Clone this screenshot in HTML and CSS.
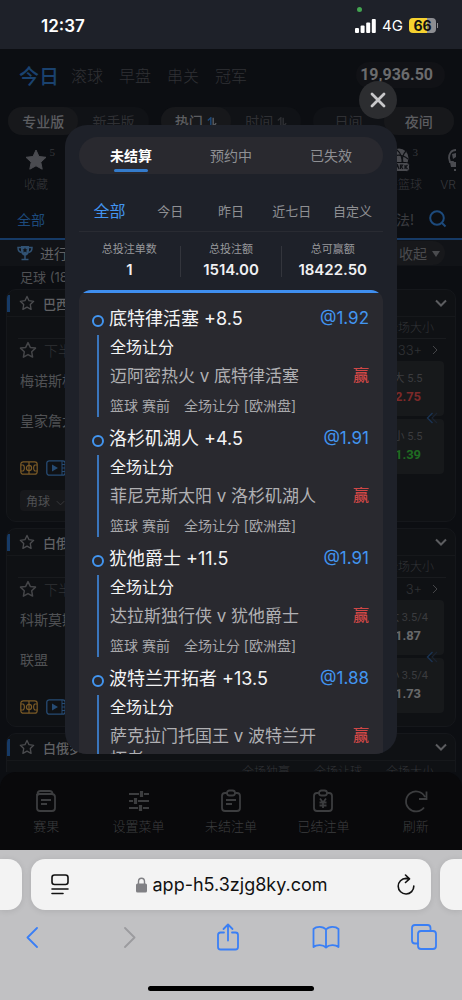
FILE: index.html
```html
<!DOCTYPE html>
<html lang="zh-CN">
<head>
<meta charset="utf-8">
<meta name="viewport" content="width=device-width, initial-scale=1">
<title>未结算注单</title>
<link rel="stylesheet" href="styles.css">
</head>
<body>
<svg class="defs" width="0" height="0" aria-hidden="true">
  <symbol id="star" viewBox="0 0 18 18"><path d="M9 1.600l2.300 4.800 5.200.7-3.800 3.700.9 5.300L9 13.600l-4.600 2.500.9-5.300L1.500 7.100l5.200-.7z" fill="none" stroke="currentColor" stroke-width="1.500" stroke-linejoin="round"/></symbol>
  <symbol id="down" viewBox="0 0 12 8"><path d="M1 1.500l5 5 5-5" fill="none" stroke="currentColor" stroke-width="2"/></symbol>
  <symbol id="thin-down" viewBox="0 0 12 8"><path d="M1 1.500l5 5 5-5" fill="none" stroke="currentColor" stroke-width="1.200"/></symbol>
  <symbol id="next" viewBox="0 0 6 10"><path d="M1 1l4 4-4 4" fill="none" stroke="currentColor" stroke-width="1"/></symbol>
  <symbol id="swap" viewBox="0 0 10 10"><path d="M.8 3.600L3.800.8v8.400" fill="none" stroke="var(--up, currentColor)" stroke-width="1.400"/><path d="M6.200.8v8.400l3-3" fill="none" stroke="currentColor" stroke-width="1.400"/></symbol>
  <symbol id="pitch" viewBox="0 0 18 14"><g fill="none" stroke="currentColor" stroke-width="1.200"><rect x=".8" y=".8" width="16.400" height="12.400" rx="2.500"/><path d="M9 1v12M1 4h2.200c1.600 1 1.600 5 0 6H1M17 4h-2.200c-1.600 1-1.600 5 0 6H17"/><circle cx="9" cy="7" r="2.600"/></g></symbol>
  <symbol id="video" viewBox="0 0 20 16"><rect x=".8" y=".8" width="18.400" height="14.400" rx="2.500" fill="none" stroke="currentColor" stroke-width="1.300"/><path d="M16 1v14M16 4.500h3M16 8h3M16 11.500h3" stroke="currentColor" fill="none"/><path d="M6 4.500l6 3.500-6 3.500z" fill="currentColor"/></symbol>
  <symbol id="more" viewBox="0 0 12 12"><path d="M6.500 1l-5 5 5 5" fill="none" stroke="#1b3352" stroke-width="1.400"/><path d="M11 1L6 6l5 5" fill="none" stroke="#1a2330" stroke-width="1.200"/></symbol>
</svg>
<div class="phone">
  <header class="status">
    <span class="clock">12:37</span>
    <span class="camera-dot"></span>
    <span class="signals">
      <svg width="21" height="14" viewBox="0 0 21 14" fill="#fff"><rect x="0" y="9" width="4" height="5" rx="1"/><rect x="5.600" y="6.500" width="4" height="7.500" rx="1"/><rect x="11.200" y="3.500" width="4" height="10.500" rx="1"/><rect x="16.800" y="0" width="4" height="14" rx="1"/></svg>
      <span class="net">4G</span>
      <span class="battery">66</span>
    </span>
  </header>

  <main class="app">
    <div class="page">
      <nav class="sports">
        <a class="on" href="#">今日</a><a href="#">滚球</a><a href="#">早盘</a><a href="#">串关</a><a href="#">冠军</a>
        <span class="balance">19,936.50</span>
      </nav>
      <div class="modes">
        <div class="pair"><button class="sel">专业版</button><button>新手版</button></div>
        <div class="pair"><button class="sel">热门<svg class="swap lit" width="10" height="10"><use href="#swap"/></svg></button><button>时间<svg class="swap" width="10" height="10"><use href="#swap"/></svg></button></div>
        <div class="pair"><button>日间</button><button class="sel">夜间</button></div>
      </div>
      <div class="kinds">
        <a class="kind" href="#"><svg width="24" height="24" viewBox="0 0 24 24"><path d="M12 2l3 6.500 7 .8-5.200 4.900 1.400 7L12 17.800l-6.200 3.400 1.400-7L2 9.300l7-.8z" fill="#4a4b50" stroke="#4a4b50" stroke-linejoin="round"/></svg><span>收藏</span><sup>5</sup></a>
        <a class="kind ball" href="#"><svg width="24" height="24" viewBox="0 0 24 24"><circle cx="13" cy="10" r="9.500" fill="#4a4b50"/><path d="M4 10c6-4 12-4 18 1M10 1c5 4 7 9 6 16M20 3c-3 3-4 8-3 12" fill="none" stroke="#101216" stroke-width="1.200"/><rect x="1" y="14.500" width="22.500" height="9" rx="3" fill="#4a4b50" stroke="#0c0e12"/><path d="M4 21v-4h3v2H4M10 21l1.500-4 1.500 4M14.500 21v-4h2l-1 2 1.500 2M19 17v4M21.500 17L19.500 19l2 2" fill="none" stroke="#101216" stroke-width="1.200"/></svg><span>街头篮球</span><sup>3</sup></a>
        <a class="kind vr" href="#"><svg width="8" height="24" viewBox="0 0 8 24"><path d="M8 2C3 2 1 6 1 10l1 4h3l3 3" fill="none" stroke="#4a4b50" stroke-width="1.800"/><path d="M4 6l4-1v4l-3 2zM2 14h6v5H3zM6 21h2v2H6z" fill="#4a4b50"/></svg><span>VR</span></a>
      </div>
      <nav class="leagues">
        <a class="on" href="#">全部</a>
        <span class="tail">法!</span>
        <button class="search" aria-label="搜索"><svg width="18" height="18" viewBox="0 0 18 18" fill="none" stroke="#1d4a7c" stroke-width="2"><circle cx="8" cy="8" r="6.800"/><path d="M13 13l3.500 3.500"/></svg></button>
      </nav>
      <div class="live">
        <svg width="16" height="16" viewBox="0 0 16 16"><path d="M4 1h8v5c0 3-2 4.500-4 4.500S4 9 4 6z" fill="#315273"/><path d="M4 2.500H1c0 3 1 4.500 3.500 5M12 2.500h3c0 3-1 4.500-3.500 5M8 10v4M4.500 14.500h7" fill="none" stroke="#315273" stroke-width="1.500"/><path d="M8 2.500l.8 1.700 1.700.2-1.200 1.200.3 1.800L8 6.500l-1.600.9.300-1.800-1.200-1.200 1.700-.2z" fill="#111317"/></svg>
        <span>进行</span>
        <button class="fold">收起<i></i></button>
      </div>
      <p class="group">足球 (18</p>

      <section class="match">
        <header><svg width="16" height="16"><use href="#star"/></svg><b>巴西</b><svg class="arrow" width="12" height="8"><use href="#down"/></svg></header>
        <div class="heads"><span>全场大小</span></div>
        <div class="period"><svg width="18" height="18"><use href="#star"/></svg><span>下半</span><a href="#">33+<svg width="6" height="10"><use href="#next"/></svg></a></div>
        <div class="body">
          <div class="teams"><p>梅诺斯杯</p><p>皇家詹大</p>
            <div class="icons"><svg class="gold" width="18" height="14"><use href="#pitch"/></svg><svg class="azure" width="20" height="16"><use href="#video"/></svg></div>
            <button class="chip">角球<svg width="9" height="6"><use href="#thin-down"/></svg></button>
          </div>
          <div class="odds"><button><span>大 5.5</span><b class="red">2.75</b></button><button><span>小 5.5</span><b class="green">1.39</b></button><svg class="more" width="12" height="12"><use href="#more"/></svg></div>
        </div>
      </section>

      <section class="match">
        <header><svg width="16" height="16"><use href="#star"/></svg><b>白俄</b><svg class="arrow" width="12" height="8"><use href="#down"/></svg></header>
        <div class="heads"><span>全场大小</span></div>
        <div class="period"><svg width="18" height="18"><use href="#star"/></svg><span>下半</span><a href="#">3+<svg width="6" height="10"><use href="#next"/></svg></a></div>
        <div class="body">
          <div class="teams"><p>科斯莫斯</p><p>联盟</p>
            <div class="icons"><svg class="gold" width="18" height="14"><use href="#pitch"/></svg><svg class="azure" width="20" height="16"><use href="#video"/></svg></div>
          </div>
          <div class="odds"><button><span>大 3.5/4</span><b>1.87</b></button><button><span>小 3.5/4</span><b>1.73</b></button><svg class="more" width="12" height="12"><use href="#more"/></svg></div>
        </div>
      </section>

      <section class="match">
        <header><svg width="16" height="16"><use href="#star"/></svg><b>白俄罗</b><svg class="arrow" width="12" height="8"><use href="#down"/></svg></header>
        <div class="heads"><span>全场独赢</span><span>全场让球</span><span>全场大小</span></div>
      </section>
    </div>

    <nav class="tabbar">
      <a href="#"><svg viewBox="0 0 24 24"><path d="M3.500 5c0-2 1-3 3-3h9c2 0 3 1 3 3M3 7.500C3 6 4 5 5.500 5h12C19.500 5 21 6 21 8v11c0 2-1 3-3 3H6c-2 0-3-1-3-3zM3 8V5M7 11h10M7 15h6"/></svg>赛果</a>
      <a href="#"><svg viewBox="0 0 24 24"><path d="M2 5h10M17 5h5M2 12h4M11 12h11M2 19h9M16 19h6"/><path d="M14.500 2v6M8.500 9v6M13.500 16v6" stroke-width="3.200"/></svg>设置菜单</a>
      <a href="#"><svg viewBox="0 0 24 24"><path d="M8 4H6C4 4 3 5 3 7v12c0 2 1 3 3 3h12c2 0 3-1 3-3V7c0-2-1-3-3-3h-2M7 11h10M7 15h6"/><rect x="8" y="1.500" width="8" height="5" rx="2.500"/></svg>未结注单</a>
      <a href="#"><svg viewBox="0 0 24 24"><path d="M8 4H6C4 4 3 5 3 7v12c0 2 1 3 3 3h12c2 0 3-1 3-3V7c0-2-1-3-3-3h-2M9 9.500l3 4 3-4M12 13v6M8.500 13.500h7M8.500 16.500h7"/><rect x="8" y="1.500" width="8" height="5" rx="2.500"/></svg>已结注单</a>
      <a href="#"><svg viewBox="0 0 24 24"><path d="M20 18.500A10 10 0 1 1 21 8M22.500 2.500V10H15"/></svg>刷新</a>
    </nav>

    <button class="close" aria-label="关闭"><svg width="16" height="16" viewBox="0 0 16 16"><path d="M2 2l12 12M14 2L2 14" stroke="#c8c8ca" stroke-width="2.800" stroke-linecap="round"/></svg></button>
    <div class="dialog" role="dialog" aria-label="注单">
      <div class="tabs"><button class="on">未结算</button><button>预约中</button><button>已失效</button></div>
      <div class="ranges"><button class="on">全部</button><button>今日</button><button>昨日</button><button>近七日</button><button>自定义</button></div>
      <dl class="stats">
        <div><dt>总投注单数</dt><dd>1</dd></div>
        <div><dt>总投注额</dt><dd>1514.00</dd></div>
        <div><dt>总可赢额</dt><dd>18422.50</dd></div>
      </dl>
      <ul class="bets">
        <li><div class="rail"></div><div class="bet"><h3><span>底特律活塞 +8.5</span><b>@1.92</b></h3><p class="play">全场让分</p><p class="versus"><span>迈阿密热火 v 底特律活塞</span><em>赢</em></p><p class="meta"><span>篮球 赛前</span><span>全场让分 [欧洲盘]</span></p></div></li>
        <li><div class="rail"></div><div class="bet"><h3><span>洛杉矶湖人 +4.5</span><b>@1.91</b></h3><p class="play">全场让分</p><p class="versus"><span>菲尼克斯太阳 v 洛杉矶湖人</span><em>赢</em></p><p class="meta"><span>篮球 赛前</span><span>全场让分 [欧洲盘]</span></p></div></li>
        <li><div class="rail"></div><div class="bet"><h3><span>犹他爵士 +11.5</span><b>@1.91</b></h3><p class="play">全场让分</p><p class="versus"><span>达拉斯独行侠 v 犹他爵士</span><em>赢</em></p><p class="meta"><span>篮球 赛前</span><span>全场让分 [欧洲盘]</span></p></div></li>
        <li><div class="rail"></div><div class="bet"><h3><span>波特兰开拓者 +13.5</span><b>@1.88</b></h3><p class="play">全场让分</p><p class="versus"><span>萨克拉门托国王 v 波特兰开拓者</span><em>赢</em></p></div></li>
      </ul>
    </div>
  </main>

  <footer class="browser">
    <div class="tabs-strip">
      <span class="peek left"></span>
      <form class="address">
        <button type="button" aria-label="页面设置"><svg width="18" height="21" viewBox="0 0 18 21" fill="none" stroke="#111" stroke-width="1.600" stroke-linecap="round"><rect x="1" y="1" width="16" height="9.500" rx="2.500"/><path d="M1 15h16M1 19.500h11"/></svg></button>
        <label class="site"><svg width="11" height="16" viewBox="0 0 11 16"><rect y="6.500" width="11" height="9" rx="1.500" fill="#808084"/><path d="M2.500 7V4.500a3 3.300 0 0 1 6 0V7" fill="none" stroke="#808084" stroke-width="1.400"/></svg><input type="text" aria-label="网址" value="app-h5.3zjg8ky.com"></label>
        <button type="button" aria-label="重新载入"><svg width="18" height="21" viewBox="0 0 18 21" fill="none" stroke="#111" stroke-width="1.600" stroke-linecap="round" stroke-linejoin="round"><path d="M16.800 12A7.800 7.800 0 1 1 9 4.400L12.500 4.800M8.500 1l4 3.800-4 3.700"/></svg></button>
      </form>
      <span class="peek right"></span>
    </div>
    <nav class="tools">
      <button aria-label="后退"><svg width="12" height="21" viewBox="0 0 12 21"><path d="M11 1L1.500 10.500 11 20"/></svg></button>
      <button class="off" aria-label="前进"><svg width="12" height="21" viewBox="0 0 12 21"><path d="M1 1l9.500 9.500L1 20"/></svg></button>
      <button aria-label="分享"><svg width="24" height="28" viewBox="0 0 24 28"><path d="M8 9.500H4.500Q2 9.500 2 12v12q0 2.500 2.500 2.500h15q2.500 0 2.500-2.500V12q0-2.500-2.500-2.500H16M12 17.500V2M7.500 6L12 1.500 16.500 6"/></svg></button>
      <button aria-label="书签"><svg width="28" height="24" viewBox="0 0 28 24"><path d="M14 4.500C11 1 4.500 1 1.500 4v18c3-2.500 9.500-2.500 12.500.5 3-3 9.500-3 12.500-.5V4C23.500 1 17 1 14 4.500zV22"/></svg></button>
      <button aria-label="标签页"><svg width="26" height="26" viewBox="0 0 26 26"><path d="M7 19.500H4Q1 19.500 1 16.500V4q0-3 3-3h12.500q3 0 3 3v3"/><rect x="7" y="7" width="18" height="18" rx="3"/></svg></button>
    </nav>
    <div class="home"></div>
  </footer>
</div>
</body>
</html>
```
FILE: styles.css
```css
*, *::before, *::after { box-sizing: border-box; }
body { margin: 0; background: #0c0e12; font-family: Inter, "Noto Sans CJK SC", sans-serif; }
button { border: 0; padding: 0; background: none; color: inherit; font: inherit; }
a { color: inherit; text-decoration: none; }
p, h3, ul, dl, dd { margin: 0; padding: 0; }
svg { flex: none; }
.defs { position: absolute; }

.phone { display: flex; flex-direction: column; height: 100vh; min-height: 640px; overflow: hidden; }

.status { position: relative; flex: none; height: 49px; padding: 2px 22px 0 41px; display: flex; align-items: center; justify-content: space-between; background: #1e2129; color: #fff; }
.clock { font-size: 17px; font-weight: 600; }
.camera-dot { position: absolute; top: 7px; right: 100px; width: 5px; height: 5px; border-radius: 50%; background: #43a551; }
.signals { display: flex; align-items: center; gap: 6px; }
.net { font-size: 15px; line-height: 15px; }
.battery { position: relative; margin-right: 4px; width: 27px; height: 15px; border-radius: 4px; background: linear-gradient(90deg, #f5d12f 66%, #8d8e92 66%); color: #111; font-size: 14px; font-weight: 700; line-height: 15px; text-align: center; }
.battery::after { content: ""; position: absolute; top: 5px; right: -2px; width: 1px; height: 5px; background: #8d8e92; }

.app { position: relative; flex: 1; min-height: 0; display: flex; flex-direction: column; }
.page { flex: 1; min-height: 0; overflow: hidden; color: #3b3c40; }

.sports { display: flex; align-items: center; gap: 16px; height: 52px; padding: 0 17px 0 19px; font-size: 16px; font-weight: 300; color: #303135; }
.sports .on { margin-right: -4px; font-size: 20px; font-weight: 500; color: #1a426f; }
.balance { margin-left: auto; height: 26px; padding: 0 12px 0 4px; border-radius: 13px; background: #111216; color: #6a6b6d; font-family: "Liberation Sans Narrow", Roboto, sans-serif; font-size: 16px; font-weight: 700; line-height: 26px; }

.modes { display: flex; justify-content: space-between; gap: 12px; padding: 6px 8px 0; }
.pair { flex: 1; display: flex; height: 28px; border-radius: 14px; background: #101216; font-size: 14px; color: #2f3034; }
.pair button { flex: 1; border-radius: 14px; }
.pair .sel { background: #17181b; color: #5c5d60; font-weight: 500; }
.swap { margin-left: 4px; }
.lit { --up: #1d4a7c; }

.kinds { display: flex; gap: 12px; height: 65px; padding: 13px 0 0 16px; font-size: 12px; font-weight: 300; color: #36373b; }
.kind { position: relative; width: 40px; display: flex; flex-direction: column; align-items: center; gap: 5px; line-height: 16px; white-space: nowrap; }
.kind sup { position: absolute; top: -2px; right: 1px; font: 300 11px/12px "Liberation Serif", serif; }
.ball { margin-left: auto; width: 48px; }
.ball sup { right: 4px; }
.vr { width: 28px; }
.vr svg { margin-left: 8px; }

.leagues { display: flex; align-items: center; height: 40px; padding: 0 15px 0 17px; border-bottom: 2px solid #163a66; font-size: 14px; }
.leagues .on { color: #1d4a7c; }
.tail { margin-left: auto; margin-right: 15px; }
.search { height: 18px; }

.live { display: flex; align-items: center; gap: 7px; height: 26px; padding: 0 17px 0 17px; background: #111317; font-size: 14px; color: #606164; }
.fold { margin-left: auto; height: 24px; padding: 0 5px 0 12px; border-radius: 12px; background: #17181b; color: #4a4b4e; }
.fold i { display: inline-block; margin-left: 5px; border: 4px solid transparent; border-top: 6px solid #4a4b4e; border-bottom: 0; vertical-align: 2px; }
.group { height: 23px; padding-left: 20px; font-size: 13px; line-height: 22px; color: #505154; }

.match { margin: 0 6px 6px; border: 1px solid #15171b; border-radius: 10px; background: #0f1114; overflow: hidden; }
.match header { display: flex; align-items: center; gap: 8px; height: 27px; padding: 0 8px 0 12px; border-bottom: 1px solid #16181b; background: linear-gradient(#163a66, #163a66) 0 5px / 3px 17px no-repeat; color: #4b4c4f; font-size: 13px; }
.match header b { color: #606164; font-weight: 500; }
.arrow { margin-left: auto; color: #5c5d60; }
.heads { display: flex; justify-content: flex-end; height: 22px; margin: 0 9px 0 11px; border-bottom: 1px solid #191b1e; font-size: 12px; font-weight: 300; line-height: 22px; color: #323337; }
.heads span { width: 72px; text-align: center; }
.period { display: flex; align-items: center; gap: 7px; height: 22px; margin: 0 17px 0 12px; font-size: 14px; font-weight: 300; color: #303135; }
.period svg { color: #444548; }
.period a { margin-left: auto; display: flex; align-items: center; gap: 10px; font-size: 13px; }
.body { display: flex; justify-content: space-between; padding: 0 11px 9px 13px; }
.teams p { height: 40px; font-size: 14px; line-height: 40px; color: #505154; }
.icons { display: flex; align-items: center; gap: 8px; height: 20px; margin-top: 17px; }
.gold { color: #7b5a26; }
.azure { color: #264b73; }
.chip { height: 21px; margin: 12px 0 1px; padding: 0 6px; border-radius: 4px; background: #17181b; color: #505154; font-size: 12px; }
.chip svg { margin-left: 6px; color: #3b3c40; }
.odds { position: relative; width: 72px; display: flex; flex-direction: column; gap: 3px; font-family: "Liberation Sans Narrow", Roboto, "Noto Sans CJK SC", sans-serif; }
.odds button { display: flex; flex-direction: column; align-items: center; height: 55px; padding-top: 9px; border-radius: 4px; background: #17191b; color: #3b3c3f; font-size: 11px; line-height: 18px; }
.odds b { font-size: 13px; color: #68696b; }
.odds .red { color: #7c2929; }
.odds .green { color: #1f6b22; }
.more { position: absolute; top: 51px; right: 6px; }

.tabbar { flex: none; display: flex; height: 78px; padding-top: 17px; border-radius: 16px 16px 0 0; background: #09090b; color: #3c3d3f; font-size: 13px; font-weight: 300; }
.tabbar a { flex: 1; display: flex; flex-direction: column; align-items: center; gap: 4px; line-height: 18px; }
.tabbar svg { width: 24px; height: 24px; fill: none; stroke: currentColor; stroke-width: 1.800; }

.close { position: absolute; top: 32px; right: 65px; display: flex; align-items: center; justify-content: center; width: 38px; height: 38px; border-radius: 50%; background: #2c2d30; }
.dialog { position: absolute; top: 76px; right: 65px; bottom: 96px; left: 65px; display: flex; flex-direction: column; padding: 12px 14px 0; border-radius: 22px; background: #1e2129; overflow: hidden; }
.tabs { flex: none; display: flex; height: 37px; padding: 0 2px; border-radius: 19px; background: #29292f; color: #8f9094; font-size: 14px; }
.tabs button { position: relative; flex: 1; padding-bottom: 2px; }
.tabs .on { color: #fff; font-weight: 700; }
.tabs .on::after { content: ""; position: absolute; bottom: 2px; left: 50%; width: 34px; height: 3px; margin-left: -17px; border-radius: 2px; background: #347bcb; }
.ranges { flex: none; display: flex; align-items: center; height: 43px; margin-top: 15px; border-bottom: 1px solid #292b32; color: #8f9094; font-size: 13px; }
.ranges button { flex: 1; }
.ranges .on { color: #4295f0; font-size: 16px; }
.stats { flex: none; display: flex; height: 58px; padding: 14px 0 13px; text-align: center; }
.stats div { flex: 1; border-left: 1px solid #33353c; }
.stats div:first-child { border-left: 0; }
.stats dt { margin-top: -4px; font-size: 11px; line-height: 14px; color: #97989b; }
.stats dd { margin-top: 2px; font-size: 15px; font-weight: 600; line-height: 24px; color: #f0f0f2; }
.bets { flex: 1; min-height: 0; padding: 14px 14px 0 13px; border-radius: 12px 12px 0 0; background: linear-gradient(#3f8ff0 3px, #29292f 3px); list-style: none; overflow: hidden; }
.bets li { display: flex; gap: 5px; min-height: 116px; margin-bottom: 4px; }
.rail { flex: none; width: 12px; padding: 11px 0 3px; display: flex; flex-direction: column; align-items: center; gap: 8px; }
.rail::before { content: ""; width: 12px; height: 12px; border: 2px solid #4295f0; border-radius: 50%; }
.rail::after { content: ""; flex: 1; width: 2px; background: #3a75bc; }
.bet { flex: 1; min-width: 0; }
.bet h3 { display: flex; justify-content: space-between; color: #f4f4f5; font-size: 18px; font-weight: 400; line-height: 29px; }
.bet b { color: #4295f0; font-size: 17px; font-weight: 400; }
.play { padding-left: 1px; color: #f4f4f5; font-size: 16px; line-height: 29px; }
.versus { display: flex; justify-content: space-between; gap: 28px; padding: 3px 0 3px 1px; color: #b0b0b3; font-size: 17px; line-height: 23px; }
.versus em { color: #cf4746; font-size: 16px; font-style: normal; font-weight: 500; line-height: 20px; }
.meta { display: flex; gap: 14px; padding-left: 1px; color: #a8a8ab; font-size: 14px; line-height: 29px; }

.browser { flex: none; height: 150px; padding-top: 9px; background: #c1c1c3; display: flex; flex-direction: column; }
.tabs-strip { display: flex; gap: 9px; }
.peek { flex: none; width: 22px; height: 51px; background: #f3f3f3; box-shadow: 0 1px 6px rgba(0, 0, 0, .1); }
.left { border-radius: 0 14px 14px 0; }
.right { border-radius: 14px 0 0 14px; }
.address { flex: 1; display: flex; align-items: center; justify-content: space-between; height: 51px; padding: 0 16px 0 20px; border-radius: 14px; background: #f3f3f3; box-shadow: 0 1px 6px rgba(0, 0, 0, .1); }
.address button { height: 21px; }
.site { display: flex; align-items: center; gap: 6px; }
.site input { width: 178px; border: 0; padding: 0; background: none; color: #111; font: 400 18px/24px Inter, sans-serif; }
.tools { display: flex; align-items: center; justify-content: space-between; height: 54px; padding: 0 24px 0 18px; }
.tools button { display: flex; justify-content: center; width: 28px; }
.tools svg { fill: none; stroke: #3a7ff5; stroke-width: 1.800; stroke-linecap: round; stroke-linejoin: round; }
.tools .off svg { stroke: #9b9b9e; }
.home { width: 36%; height: 5px; margin: auto auto 9px; border-radius: 3px; background: #000; }
```
